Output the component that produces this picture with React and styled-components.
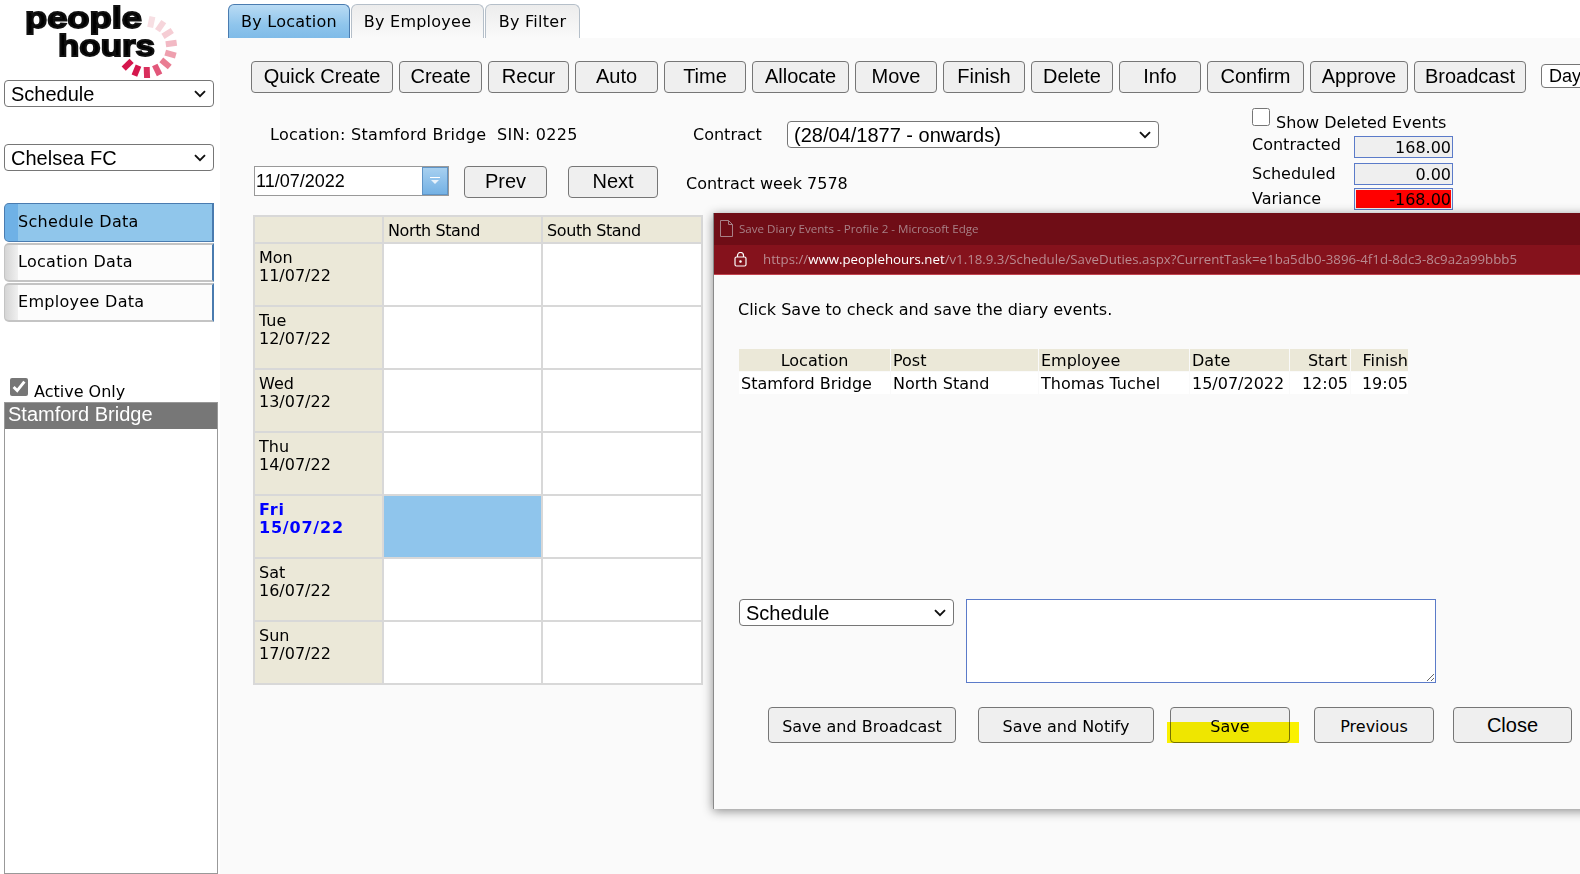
import React from 'react';
import styled, { createGlobalStyle, css } from 'styled-components';

const verdana = '"DejaVu Sans", Verdana, sans-serif';
const arial = '"Liberation Sans", Arial, sans-serif';

const chevron = `url("data:image/svg+xml,%3Csvg xmlns='http://www.w3.org/2000/svg' width='12' height='8' viewBox='0 0 12 8'%3E%3Cpath d='M1 1.2l5 5 5-5' fill='none' stroke='%23111' stroke-width='1.9'/%3E%3C/svg%3E")`;

const tools = [
   ['Quick Create', 142], ['Create', 83], ['Recur', 81], ['Auto', 83], ['Time', 82], ['Allocate', 97],
   ['Move', 82], ['Finish', 82], ['Delete', 82], ['Info', 82], ['Confirm', 97], ['Approve', 98], ['Broadcast', 112]
];

const days = [
   ['Mon', '11/07/22'], ['Tue', '12/07/22'], ['Wed', '13/07/22'], ['Thu', '14/07/22'],
   ['Fri', '15/07/22'], ['Sat', '16/07/22'], ['Sun', '17/07/22']
];

const ticks = [
   [-78, '#f7dfe3'], [-55, '#f6d5db'], [-32, '#f5cdd4'], [-8, '#f2b9c4'], [16, '#ee9fae'],
   [40, '#e97d92'], [64, '#e2577a'], [88, '#d92f5c'], [112, '#d5164d'], [136, '#d5164d']
];

const Logo = () => (
   <LogoSvg viewBox="0 0 220 80" width="220" height="80">
      {ticks.map(([deg, color]) => (
         <rect key={deg} x="166" y="44" width="11" height="6" fill={color} transform={`rotate(${deg} 146 47)`} />
      ))}
      <text x="25" y="28" fontFamily="Liberation Sans" fontWeight="700" fontSize="30" textLength="117" lengthAdjust="spacingAndGlyphs" stroke="#111" strokeWidth="1.8">people</text>
      <text x="58" y="56" fontFamily="Liberation Sans" fontWeight="700" fontSize="30" textLength="97" lengthAdjust="spacingAndGlyphs" stroke="#111" strokeWidth="1.8">hours</text>
   </LogoSvg>
);

const App = () => {
   return (
      <Page>
         <GlobalStyle />
         <Sidebar>
            <Logo />
            <SideSelect defaultValue="Schedule"><option>Schedule</option></SideSelect>
            <SideSelect $top={37} defaultValue="Chelsea FC"><option>Chelsea FC</option></SideSelect>
            <SideNav>
               <NavItem $active>Schedule Data</NavItem>
               <NavItem>Location Data</NavItem>
               <NavItem>Employee Data</NavItem>
            </SideNav>
            <ActiveRow>
               <input type="checkbox" defaultChecked />
               <span>Active Only</span>
            </ActiveRow>
            <ListBox>
               <ListSelected>Stamford Bridge</ListSelected>
            </ListBox>
         </Sidebar>

         <Main>
            <Tabs>
               <Tab $active $w={122}>By Location</Tab>
               <Tab $w={133}>By Employee</Tab>
               <Tab $w={95}>By Filter</Tab>
            </Tabs>
            <Panel>
               <Toolbar>
                  {tools.map(([label, w]) => <ToolButton key={label} $w={w}>{label}</ToolButton>)}
                  <DayButton>Day</DayButton>
               </Toolbar>

               <TopRow>
                  <InfoColumn>
                     <LocationRow>
                        <LocationText>Location: Stamford Bridge&nbsp; SIN: 0225</LocationText>
                        <ContractLabel>Contract</ContractLabel>
                        <ContractSelect defaultValue="c"><option value="c">(28/04/1877 - onwards)</option></ContractSelect>
                     </LocationRow>
                     <DateRow>
                        <DateBox>
                           <DateInput defaultValue="11/07/2022" />
                           <DateDrop>
                              <svg width="14" height="10" viewBox="0 0 14 10">
                                 <rect x="2" y="1" width="10" height="1" fill="#fff" />
                                 <path d="M3 4h8l-4 4z" fill="#e8f2fb" />
                              </svg>
                           </DateDrop>
                        </DateBox>
                        <PagerButton $w={83} $left={15}>Prev</PagerButton>
                        <PagerButton $w={90} $left={21}>Next</PagerButton>
                        <WeekText>Contract week 7578</WeekText>
                     </DateRow>
                  </InfoColumn>
                  <Stats>
                     <DeletedRow>
                        <input type="checkbox" />
                        <span>Show Deleted Events</span>
                     </DeletedRow>
                     <StatRow $h={27} $top={5} $labelTop={-1}>
                        <label>Contracted</label>
                        <StatInput readOnly value="168.00" />
                     </StatRow>
                     <StatRow $h={25} $labelTop={1}>
                        <label>Scheduled</label>
                        <StatInput readOnly value="0.00" />
                     </StatRow>
                     <StatRow $h={22} $labelTop={1}>
                        <label>Variance</label>
                        <StatInput $bad readOnly value="-168.00" />
                     </StatRow>
                  </Stats>
               </TopRow>

               <Roster>
                  <colgroup><col width="129" /><col width="159" /><col width="160" /></colgroup>
                  <thead>
                     <tr>
                        <HeadCell />
                        <HeadCell>North Stand</HeadCell>
                        <HeadCell>South Stand</HeadCell>
                     </tr>
                  </thead>
                  <tbody>
                     {days.map(([day, date]) => {
                        const today = day === 'Fri';
                        return (
                           <tr key={day}>
                              <DayCell $today={today}>{day}<br />{date}</DayCell>
                              <SlotCell $on={today} />
                              <SlotCell />
                           </tr>
                        );
                     })}
                  </tbody>
               </Roster>
            </Panel>
         </Main>

         <Dialog>
            <TitleBar>
               <svg width="13" height="17" viewBox="0 0 13 17" fill="none" stroke="#a88086" strokeWidth="1">
                  <path d="M.5.5h8l4 4v12H.5zM8.5.5v4h4" />
               </svg>
               <span>Save Diary Events - Profile 2 - Microsoft Edge</span>
            </TitleBar>
            <AddressBar>
               <svg width="13" height="15" viewBox="0 0 13 15" fill="none" stroke="#fff" strokeWidth="1.2">
                  <rect x="1" y="5" width="11" height="9" rx="1.5" />
                  <path d="M3.5 5V3.5a3 3 0 0 1 6 0V5" />
                  <circle cx="6.5" cy="9.5" r=".7" fill="#fff" />
               </svg>
               <Url>https://<b>www.peoplehours.net</b>/v1.18.9.3/Schedule/SaveDuties.aspx?CurrentTask=e1ba5db0-3896-4f1d-8dc3-8c9a2a99bbb5</Url>
            </AddressBar>
            <DialogBody>
               <Hint>Click Save to check and save the diary events.</Hint>
               <SaveTable>
                  <colgroup>
                     <col width="151" /><col width="147" /><col width="150" /><col width="99" /><col width="60" /><col width="57" />
                  </colgroup>
                  <thead>
                     <tr>
                        <SaveHead $align="center">Location</SaveHead>
                        <SaveHead>Post</SaveHead>
                        <SaveHead>Employee</SaveHead>
                        <SaveHead>Date</SaveHead>
                        <SaveHead $align="right" $pad={3}>Start</SaveHead>
                        <SaveHead $align="right" $pad={0}>Finish</SaveHead>
                     </tr>
                  </thead>
                  <tbody>
                     <tr>
                        <SaveCell>Stamford Bridge</SaveCell>
                        <SaveCell>North Stand</SaveCell>
                        <SaveCell>Thomas Tuchel</SaveCell>
                        <SaveCell>15/07/2022</SaveCell>
                        <SaveCell $align="right" $pad={2}>12:05</SaveCell>
                        <SaveCell $align="right" $pad={0}>19:05</SaveCell>
                     </tr>
                  </tbody>
               </SaveTable>
               <NotesRow>
                  <NotesSelect defaultValue="Schedule"><option>Schedule</option></NotesSelect>
                  <Notes />
               </NotesRow>
               <ActionRow>
                  <ActionButton $w={188}>Save and Broadcast</ActionButton>
                  <ActionButton $w={176} $left={22}>Save and Notify</ActionButton>
                  <ActionButton $w={120} $left={16}>
                     Save
                     <Highlight />
                  </ActionButton>
                  <ActionButton $w={120} $left={24}>Previous</ActionButton>
                  <ActionButton $w={119} $left={19} $large>Close</ActionButton>
               </ActionRow>
            </DialogBody>
         </Dialog>
      </Page>
   );
}

export default App;

const GlobalStyle = createGlobalStyle`
   html, body {
      margin: 0;
      height: 100%;
      background: #fafafa;
      overflow: hidden;
   }
   * {
      box-sizing: border-box;
   }
`;

const selectBase = css`
   appearance: none;
   height: 27px;
   padding: 0 24px 0 6px;
   background: #fff ${chevron} no-repeat right 7px center;
   border: 1px solid #767676;
   border-radius: 4px;
   font-family: ${arial};
   font-size: 20px;
   color: #000;
`;

const Page = styled.div`
   position: relative;
   display: flex;
   width: 1580px;
   height: 874px;
   overflow: hidden;
   color: #000;
   font-family: ${verdana};
   font-size: 16px;
`;

const Sidebar = styled.aside`
   display: flex;
   flex-direction: column;
   width: 220px;
   flex-shrink: 0;
   padding-left: 4px;
   background: #fff;
`;

const LogoSvg = styled.svg`
   display: block;
   margin-left: -4px;
   flex-shrink: 0;
`;

const SideSelect = styled.select`
   ${selectBase}
   width: 210px;
   margin-top: ${props => props.$top || 0}px;
   flex-shrink: 0;
`;

const SideNav = styled.nav`
   display: flex;
   flex-direction: column;
   gap: 1px;
   width: 210px;
   margin-top: 32px;
`;

const NavItem = styled.div`
   display: flex;
   align-items: center;
   height: 39px;
   padding: 0 0 2px 13px;
   border: 1px solid ${props => props.$active ? '#4a7cb0' : '#c4c4c4'};
   border-width: ${props => props.$active ? '1px' : '2px 1px'};
   border-right: 2px solid #4a7cb0;
   border-radius: 5px 0 0 5px;
   letter-spacing: .3px;
   background: ${props => props.$active
      ? 'linear-gradient(90deg, #6fb1e6 0, #6fb1e6 13px, #90c6eb 13px)'
      : 'linear-gradient(90deg, #d5d5d5 0, #f0f0f0 13px, #fcfcfc 13px)'};
`;

const ActiveRow = styled.label`
   display: flex;
   align-items: flex-end;
   height: 22px;
   margin-top: 56px;
   padding-left: 6px;
   input {
      width: 18px;
      height: 18px;
      margin: 0 6px 4px 0;
      accent-color: #767676;
   }
   span {
      line-height: 18px;
      position: relative;
      top: 1px;
   }
`;

const ListBox = styled.div`
   flex: 1;
   width: 214px;
   margin-top: 2px;
   border: 1px solid #999;
   background: #fff;
`;

const ListSelected = styled.div`
   height: 26px;
   padding-left: 3px;
   background: #777;
   color: #fff;
   font-family: ${arial};
   font-size: 20px;
   line-height: 22px;
`;

const Main = styled.main`
   flex: 1;
   min-width: 0;
   display: flex;
   flex-direction: column;
   background: #fff;
`;

const Tabs = styled.div`
   display: flex;
   gap: 1px;
   height: 38px;
   padding: 4px 0 0 8px;
`;

const Tab = styled.div`
   width: ${props => props.$w}px;
   border: 1px solid ${props => props.$active ? '#4a7cb0' : '#b5bfc9'};
   border-bottom: 0;
   border-radius: 6px 6px 0 0;
   background: ${props => props.$active
      ? 'linear-gradient(180deg, #b9dbf4, #8fc5ec 60%, #7fbbe8)'
      : 'linear-gradient(180deg, #ececec, #fafafa)'};
   text-align: center;
   font-size: 16px;
   line-height: 33px;
   letter-spacing: .25px;
`;

const Panel = styled.div`
   flex: 1;
   padding: 23px 0 0 31px;
   background: #fafafa;
   overflow: hidden;
`;

const Toolbar = styled.div`
   display: flex;
   gap: 6px;
   height: 32px;
   align-items: flex-start;
`;

const ToolButton = styled.button`
   width: ${props => props.$w}px;
   height: 32px;
   flex-shrink: 0;
   padding: 0 0 2px;
   background: #efefef;
   border: 1px solid #767676;
   border-radius: 4px;
   font-family: ${arial};
   font-size: 20px;
   color: #000;
`;

const DayButton = styled.button`
   width: 70px;
   height: 24px;
   flex-shrink: 0;
   margin: 3px 0 0 9px;
   padding: 0 0 0 7px;
   text-align: left;
   background: #fff;
   border: 1px solid #767676;
   border-radius: 4px;
   font-family: ${arial};
   font-size: 18px;
   color: #000;
`;

const TopRow = styled.div`
   display: flex;
   align-items: flex-start;
   margin-top: 15px;
`;

const InfoColumn = styled.div`
   width: 1001px;
   flex-shrink: 0;
   padding-top: 13px;
`;

const LocationRow = styled.div`
   display: flex;
   align-items: center;
   height: 27px;
`;

const LocationText = styled.span`
   width: 442px;
   padding-left: 19px;
   white-space: pre;
   letter-spacing: .29px;
`;

const ContractLabel = styled.span`
   width: 94px;
`;

const ContractSelect = styled.select`
   ${selectBase}
   width: 372px;
`;

const DateRow = styled.div`
   display: flex;
   align-items: flex-start;
   margin-top: 18px;
   padding-left: 3px;
`;

const DateBox = styled.div`
   display: flex;
   width: 195px;
   height: 30px;
   border: 1px solid #999;
   background: #fff;
`;

const DateInput = styled.input`
   flex: 1;
   min-width: 0;
   padding: 1px 0 0 1px;
   border: 0;
   background: transparent;
   font-family: ${arial};
   font-size: 18px;
   color: #000;
`;

const DateDrop = styled.span`
   display: flex;
   align-items: center;
   justify-content: center;
   width: 26px;
   background: linear-gradient(180deg, #a7d0f0, #74b1e4);
   border: 1px solid #5f94c6;
`;

const PagerButton = styled.button`
   width: ${props => props.$w}px;
   height: 32px;
   margin-left: ${props => props.$left}px;
   padding: 0 0 2px;
   background: #efefef;
   border: 1px solid #767676;
   border-radius: 4px;
   font-family: ${arial};
   font-size: 20px;
   color: #000;
`;

const WeekText = styled.span`
   margin: 8px 0 0 28px;
`;

const Stats = styled.div`
   display: flex;
   flex-direction: column;
   width: 204px;
`;

const DeletedRow = styled.label`
   display: flex;
   align-items: flex-end;
   height: 23px;
   input {
      width: 18px;
      height: 18px;
      margin: 0 6px 5px 0;
   }
   span {
      line-height: 18px;
      position: relative;
      top: 1px;
   }
`;

const StatRow = styled.div`
   display: flex;
   align-items: flex-start;
   justify-content: space-between;
   height: ${props => props.$h}px;
   margin-top: ${props => props.$top || 0}px;
   padding-right: 3px;
   label {
      line-height: 19px;
      margin-top: ${props => props.$labelTop}px;
   }
`;

const StatInput = styled.input`
   width: 99px;
   height: 22px;
   padding: 0 1px 0 0;
   border: 1px solid #5b7bc9;
   background: ${props => props.$bad ? '#ff0000' : '#efefef'};
   box-shadow: ${props => props.$bad ? 'inset 0 0 0 1px #efefef' : 'none'};
   text-align: right;
   font-family: ${verdana};
   font-size: 16px;
   color: #000;
   outline: none;
`;

const Roster = styled.table`
   width: 449px;
   margin: 5px 0 0 2px;
   table-layout: fixed;
   border-collapse: collapse;
   border: 2px solid #d8d8d8;
`;

const HeadCell = styled.th`
   height: 27px;
   padding: 2px 4px 0;
   background: #ebe8d8;
   border: 2px solid #d8d8d8;
   text-align: left;
   font-weight: 400;
   letter-spacing: -.4px;
`;

const DayCell = styled.td`
   height: 63px;
   padding: 5px 4px 0;
   vertical-align: top;
   background: #ebe8d8;
   border: 2px solid #d8d8d8;
   line-height: 18px;
   font-weight: ${props => props.$today ? 700 : 400};
   color: ${props => props.$today ? '#0000ff' : '#000'};
   letter-spacing: ${props => props.$today ? '.8px' : 0};
`;

const SlotCell = styled.td`
   background: ${props => props.$on ? '#8fc5ec' : '#fff'};
   border: 2px solid #d8d8d8;
`;

const Dialog = styled.section`
   position: absolute;
   left: 713px;
   top: 213px;
   width: 880px;
   height: 596px;
   display: flex;
   flex-direction: column;
   background: #fafafa;
   border-left: 1px solid #8a8a8a;
   box-shadow: 0 2px 10px rgba(0, 0, 0, 0.45);
`;

const TitleBar = styled.div`
   display: flex;
   align-items: center;
   gap: 6px;
   height: 32px;
   padding: 0 0 1px 6px;
   background: #6f0d16;
   color: #a88086;
   font-family: "Open Sans", sans-serif;
   font-size: 11.6px;
`;

const AddressBar = styled.div`
   display: flex;
   align-items: center;
   height: 30px;
   padding: 0 0 1px 20px;
   background: #85121c;
   border-bottom: 1px solid #c2434e;
`;

const Url = styled.span`
   margin-left: 16px;
   color: #b98a90;
   font-family: "Open Sans", sans-serif;
   font-size: 13.25px;
   white-space: nowrap;
   b {
      font-weight: 400;
      color: #fff;
   }
`;

const DialogBody = styled.div`
   flex: 1;
   padding: 24px 0 0 24px;
`;

const Hint = styled.p`
   margin: 0;
   line-height: 22px;
`;

const SaveTable = styled.table`
   width: 671px;
   margin-top: 27px;
   table-layout: fixed;
   border-collapse: separate;
   border-spacing: 1px;
`;

const SaveHead = styled.th`
   height: 22px;
   padding: 0 ${props => props.$pad ?? 2}px 0 2px;
   background: #ebe8d8;
   font-weight: 400;
   text-align: ${props => props.$align || 'left'};
`;

const SaveCell = styled.td`
   height: 22px;
   padding: 0 ${props => props.$pad ?? 2}px 0 2px;
   background: #fff;
   text-align: ${props => props.$align || 'left'};
`;

const NotesRow = styled.div`
   display: flex;
   gap: 12px;
   margin: 204px 0 0 1px;
`;

const NotesSelect = styled.select`
   ${selectBase}
   width: 215px;
`;

const Notes = styled.textarea`
   width: 470px;
   height: 84px;
   background: #fff;
   border: 1px solid #5b7bc9;
   outline: none;
`;

const ActionRow = styled.div`
   display: flex;
   margin: 24px 0 0 30px;
`;

const ActionButton = styled.button`
   position: relative;
   width: ${props => props.$w}px;
   height: 36px;
   margin-left: ${props => props.$left || 0}px;
   flex-shrink: 0;
   padding: ${props => props.$large ? 0 : '2px 0 0'};
   background: #efefef;
   border: 1px solid #767676;
   border-radius: 4px;
   color: #000;
   font-family: ${props => props.$large ? arial : verdana};
   font-size: ${props => props.$large ? 20 : 16}px;
`;

const Highlight = styled.i`
   position: absolute;
   left: -4px;
   right: -10px;
   bottom: -1px;
   height: 21px;
   background: #fff600;
   mix-blend-mode: multiply;
`;
